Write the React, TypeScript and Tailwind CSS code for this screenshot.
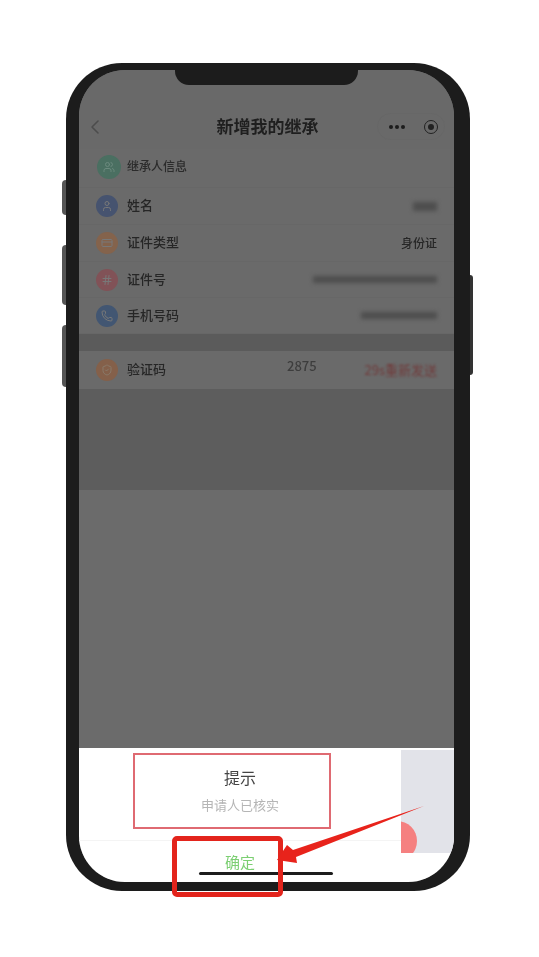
import { ChevronLeft, User, Phone, CreditCard, Hash, ShieldCheck, Users } from "lucide-react";

const FONT = "font-['Noto_Sans_CJK_SC','Liberation_Sans',sans-serif]";

const ROWS = [
  { label: "姓名", icon: User, color: "bg-[#46536f]", h: "h-[37px]" },
  { label: "证件类型", icon: CreditCard, color: "bg-[#84634c]", h: "h-[37px]", value: "身份证" },
  { label: "证件号", icon: Hash, color: "bg-[#815257]", h: "h-[36px]" },
  { label: "手机号码", icon: Phone, color: "bg-[#425672]", h: "h-[36px]" },
];

function Row({ row }: { row: (typeof ROWS)[number] }) {
  const Icon = row.icon;
  return (
    <div className={`flex items-center pl-[17px] pr-[17px] border-b border-[#676767] ${row.h}`}>
      <div className={`w-[22px] h-[22px] rounded-full flex items-center justify-center blur-[0.5px] ${row.color}`}>
        <Icon size={12} className="text-[#787878]" />
      </div>
      <span className="ml-[9px] mb-[2px] text-[13px] font-medium text-[#262626] blur-[0.7px]">{row.label}</span>
      <div className="ml-auto flex items-center">
        {row.value && <span className="text-[12px] font-medium text-[#262626] blur-[0.7px]">{row.value}</span>}
        {row.label === "姓名" && <div className="w-[24px] h-[9px] bg-[#4e4e4e] blur-[2px]" />}
        {row.label === "证件号" && <div className="w-[124px] h-[7px] bg-[#4e4e4e] blur-[2px]" />}
        {row.label === "手机号码" && <div className="w-[76px] h-[7px] bg-[#4e4e4e] blur-[2px]" />}
      </div>
    </div>
  );
}

export default function App() {
  return (
    <div className={`relative w-[539px] h-[957px] bg-white overflow-hidden pt-[63px] pl-[66px] ${FONT}`}>
      <div className="relative w-[404px] h-[828px] rounded-[56px] bg-[#1c1c1c] pt-[7px] pl-[13px] pr-[16px] pb-[9px]">
        {/* side buttons */}
        <div className="absolute left-[-4px] top-[117px] w-[4px] h-[35px] bg-[#555555] rounded-l" />
        <div className="absolute left-[-4px] top-[182px] w-[4px] h-[60px] bg-[#555555] rounded-l" />
        <div className="absolute left-[-4px] top-[262px] w-[4px] h-[62px] bg-[#555555] rounded-l" />
        <div className="absolute right-[-3px] top-[212px] w-[3px] h-[100px] bg-[#333333] rounded-r" />

        <div className="relative flex flex-col h-full rounded-[46px] overflow-hidden bg-[#6b6b6b]">
          {/* notch */}
          <div className="absolute z-10 left-[96px] top-0 w-[183px] h-[15px] bg-[#1c1c1c] rounded-b-[14px]" />

          {/* title bar */}
          <div className="flex items-center h-[79px] pt-[35px] bg-[#696969] relative shrink-0">
            <ChevronLeft size={24} strokeWidth={1.5} className="ml-[4px] text-[#4c4c4c] blur-[0.4px]" />
            <span className="absolute left-0 right-[-2px] top-[44px] text-center text-[17px] leading-[24px] font-bold text-[#1f1f1f] blur-[0.7px]">新增我的继承</span>
            <div className="absolute left-[298px] top-[43px] w-[68px] h-[27px] rounded-full border border-[#676767] flex items-center justify-between pl-[11px] pr-[6px]">
              <div className="flex gap-[2px]">
                <div className="w-[4px] h-[4px] rounded-full bg-[#1c1c1c]" />
                <div className="w-[4px] h-[4px] rounded-full bg-[#1c1c1c]" />
                <div className="w-[4px] h-[4px] rounded-full bg-[#1c1c1c]" />
              </div>
              <div className="w-[14px] h-[14px] rounded-full border-[1.5px] border-[#222222] flex items-center justify-center">
                <div className="w-[6px] h-[6px] rounded-full bg-[#222222]" />
              </div>
            </div>
          </div>

          {/* heir info heading */}
          <div className="flex items-center h-[39px] pl-[18px] pb-[3px] border-b border-[#676767] bg-[#6a6a6a] shrink-0">
            <div className="w-[24px] h-[24px] rounded-full bg-[#4a6f61] flex items-center justify-center blur-[0.5px]">
              <Users size={12} className="text-[#6c8a7e]" />
            </div>
            <span className="ml-[6px] mb-[1px] text-[12px] font-medium text-[#2b2b2b] blur-[0.7px]">继承人信息</span>
          </div>

          <div className="bg-[#6a6a6a] shrink-0">
            {ROWS.map((row) => (
              <Row key={row.label} row={row} />
            ))}
          </div>

          <div className="h-[17px] bg-[#5b5b5b] shrink-0" />

          {/* code row */}
          <div className="relative flex items-center h-[38px] pl-[17px] pr-[17px] bg-[#6a6a6a] shrink-0">
            <div className="w-[22px] h-[22px] rounded-full bg-[#84604a] flex items-center justify-center blur-[0.5px]">
              <ShieldCheck size={12} className="text-[#8a7a6a]" />
            </div>
            <span className="ml-[9px] mb-[2px] text-[13px] font-medium text-[#262626] blur-[0.7px]">验证码</span>
            <span className="absolute left-[208px] top-[5px] text-[13px] font-medium text-[#3d3d3d] blur-[0.7px]">2875</span>
            <span className="ml-auto mb-[1px] text-[13px] text-[#703a3a] blur-[0.8px]">29s重新发送</span>
          </div>

          <div className="h-[101px] bg-[#5d5d5d] shrink-0" />
          <div className="flex-1 bg-[#6b6b6b]" />

          {/* dialog */}
          <div className="relative h-[134px] bg-white shrink-0 flex">
            <div className="w-[322px] shrink-0 flex flex-col">
              <div className="h-[93px] flex flex-col items-center pt-[17px] border-b border-[#f4f4f4]">
                <span className="text-[16px] leading-[24px] text-[#444444] blur-[0.6px]">提示</span>
                <span className="mt-[7px] text-[13px] leading-[18px] text-[#b5b5b5] blur-[0.6px]">申请人已核实</span>
              </div>
              <div className="flex-1 flex justify-center pt-[9px]">
                <span className="text-[15px] leading-[24px] text-[#7ccf72] blur-[0.6px]">确定</span>
              </div>
            </div>
            <div className="relative w-[53px] h-[103px] mt-[2px] bg-[#e2e3e9] overflow-hidden">
              <div className="absolute left-[-24px] top-[71px] w-[40px] h-[40px] rounded-full bg-[#f58080]" />
            </div>
            <div className="absolute left-[120px] bottom-[7px] w-[134px] h-[3px] bg-[#1c1c1c] rounded-full" />
          </div>
        </div>
      </div>

      {/* annotation boxes and arrow */}
      <div className="absolute left-[133px] top-[753px] w-[198px] h-[76px] border-2 border-[#df6a72]" />
      <div className="absolute left-[172px] top-[836px] w-[111px] h-[61px] border-[5px] border-[#e3241c] rounded-[5px]" />
      <svg className="absolute left-0 top-0" width="539" height="957" viewBox="0 0 539 957">
        <path d="M424 806 L293 850 L287 845 L277 860 L297 863 L296 857 Z" fill="#e8231b" />
      </svg>
    </div>
  );
}
